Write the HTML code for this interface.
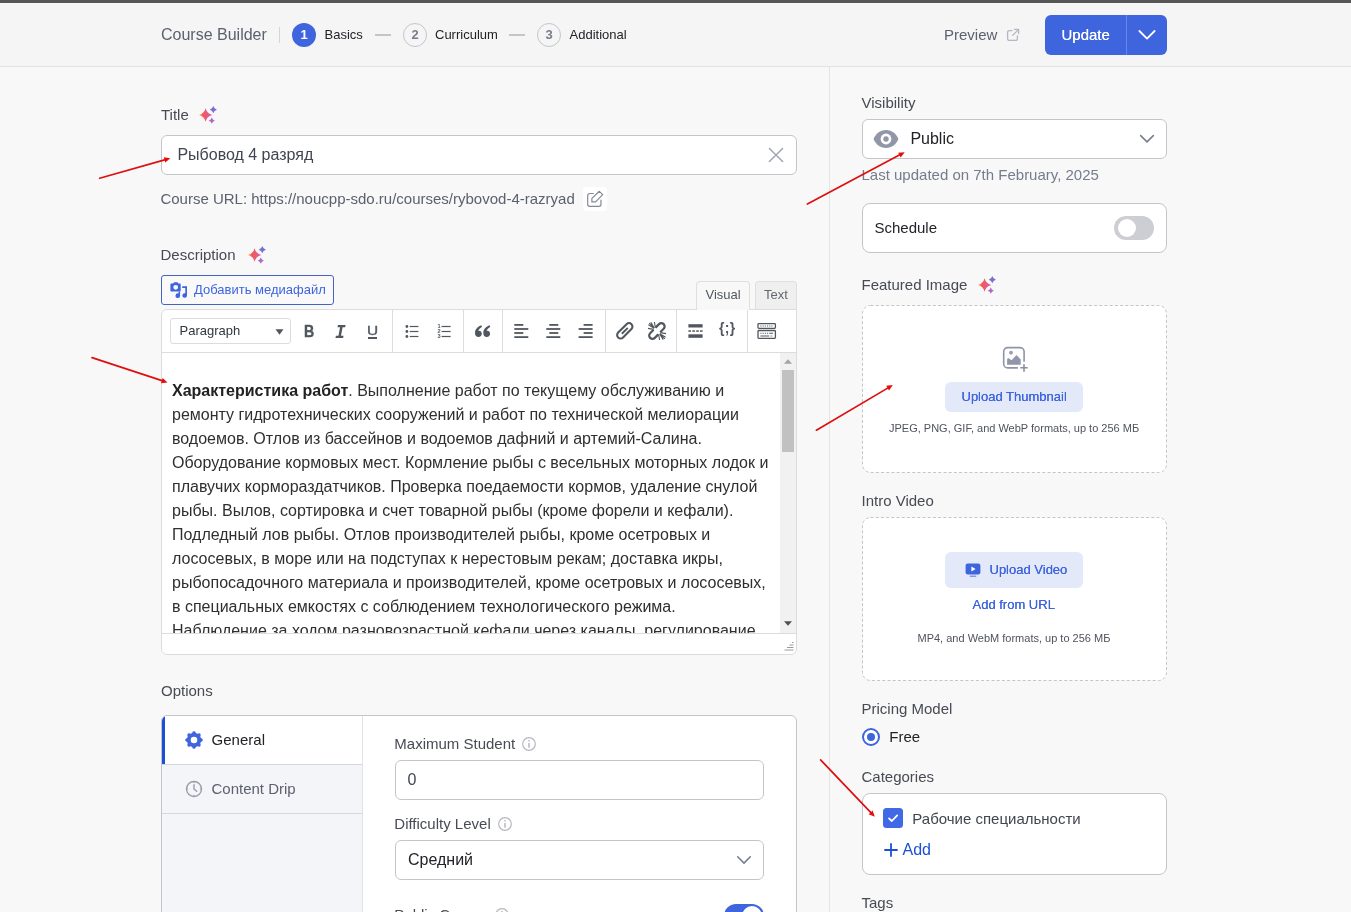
<!DOCTYPE html>
<html lang="ru"><head><meta charset="utf-8"><title>Course Builder</title>
<style>
*{box-sizing:border-box;margin:0;padding:0}
html,body{width:1351px;height:912px;overflow:hidden}
body{background:#f8f8f8;font-family:"Liberation Sans",sans-serif;position:relative;color:#484b54}
.a{position:absolute;display:block}
.t{position:absolute;white-space:nowrap;display:block}
.box{position:absolute;background:#fff;border:1px solid #c3c5cb;border-radius:6px}
.dash{position:absolute}
.ed-line{position:absolute;left:172px;white-space:nowrap;font-size:16px;line-height:24px;color:#2f2f2f;height:24px}
.sep{position:absolute;top:310px;width:1px;height:42px;background:#dcdcde}
.tb{position:absolute;font-family:"Liberation Sans",sans-serif;color:#50575e}
</style></head><body>
<div id="w" style="position:absolute;left:0;top:0;width:1351px;height:912px;will-change:transform">

<div class="a" style="left:0;top:0;width:1351px;height:3px;background:#565656"></div>
<div class="a" style="left:0;top:3px;width:1351px;height:64px;background:#f5f5f5;border-bottom:1px solid #e1e2e6"></div>
<span class="t" style="left:161px;top:27px;font-size:16px;line-height:16px;color:#5b616f;">Course Builder</span>
<div class="a" style="left:279px;top:27px;width:1px;height:16px;background:#d3d5db"></div>
<div class="a" style="left:292px;top:23px;width:24px;height:24px;border-radius:50%;background:#3e64de"></div>
<span class="t" style="left:300.6px;top:28px;font-size:13px;line-height:13px;color:#fff;font-weight:700;">1</span>
<span class="t" style="left:324.5px;top:28px;font-size:13px;line-height:13px;color:#212327;">Basics</span>
<div class="a" style="left:375px;top:34px;width:16px;height:2px;background:#c3c5cb"></div>
<div class="a" style="left:403px;top:23px;width:24px;height:24px;border-radius:50%;border:1px solid #c3c5cb"></div>
<span class="t" style="left:411.4px;top:28px;font-size:13px;line-height:13px;color:#767c8e;font-weight:700;">2</span>
<span class="t" style="left:435px;top:28px;font-size:13px;line-height:13px;color:#212327;">Curriculum</span>
<div class="a" style="left:509px;top:34px;width:16px;height:2px;background:#c3c5cb"></div>
<div class="a" style="left:537px;top:23px;width:24px;height:24px;border-radius:50%;border:1px solid #c3c5cb"></div>
<span class="t" style="left:545.4px;top:28px;font-size:13px;line-height:13px;color:#767c8e;font-weight:700;">3</span>
<span class="t" style="left:569.5px;top:28px;font-size:13px;line-height:13px;color:#212327;">Additional</span>
<span class="t" style="left:944px;top:27px;font-size:15px;line-height:15px;color:#5b616f;">Preview</span>
<svg class="a" style="left:1006px;top:28px" width="14" height="14" viewBox="0 0 14 14" fill="none" stroke="#b4b7c0" stroke-width="1.3" stroke-linecap="round" stroke-linejoin="round"><path d="M6 2.6H3.2a1.6 1.6 0 0 0-1.6 1.6v6.6a1.6 1.6 0 0 0 1.6 1.6h6.6a1.6 1.6 0 0 0 1.6-1.6V8"/><path d="M8.4 1.4h4.2v4.2M12.4 1.6 6.6 7.4"/></svg>
<div class="a" style="left:1045px;top:15px;width:122px;height:40px;border-radius:6px;background:#3e64de"></div>
<div class="a" style="left:1126px;top:15px;width:1px;height:40px;background:#6a88ea"></div>
<span class="t" style="left:1061.5px;top:27px;font-size:15px;line-height:15px;color:#fff;text-shadow:0 0 0.4px #fff;">Update</span>
<svg class="a" style="left:1137px;top:28px" width="20" height="14" viewBox="0 0 20 14" fill="none" stroke="#fff" stroke-width="1.8" stroke-linecap="round" stroke-linejoin="round"><path d="M2.4 3 10 10.6 17.6 3"/></svg>
<div class="a" style="left:829px;top:67px;width:1px;height:845px;background:#e3e4e8"></div>
<span class="t" style="left:161px;top:107px;font-size:15px;line-height:15px;color:#484b54;">Title</span>
<svg class="a" style="left:199px;top:106px" width="18" height="18" viewBox="0 0 18 18"><defs><linearGradient id="sg1" x1="0" y1="0" x2="1" y2="0"><stop offset="0" stop-color="#ffb84d"/><stop offset=".3" stop-color="#f25757"/><stop offset=".7" stop-color="#e75a8a"/><stop offset="1" stop-color="#c765c0"/></linearGradient></defs><path d="M6.6 2.30 Q7.94 7.66 13.30 9 Q7.94 10.34 6.6 15.70 Q5.26 10.34 -0.10 9 Q5.26 7.66 6.6 2.30Z" fill="url(#sg1)"/><path d="M14.3 0.10 Q15.09 2.91 17.90 3.7 Q15.09 4.49 14.3 7.30 Q13.51 4.49 10.70 3.7 Q13.51 2.91 14.3 0.10Z" fill="#7a6fd2"/><path d="M12.8 11.60 Q13.48 14.02 15.90 14.7 Q13.48 15.38 12.8 17.80 Q12.12 15.38 9.70 14.7 Q12.12 14.02 12.8 11.60Z" fill="#b565c4"/></svg>
<div class="box" style="left:161px;top:135px;width:636px;height:40px"></div>
<span class="t" style="left:177.4px;top:147px;font-size:16px;line-height:16px;color:#41454f;">Рыбовод 4 разряд</span>
<svg class="a" style="left:767px;top:146px" width="18" height="18" viewBox="0 0 18 18" fill="none" stroke="#9ea2ae" stroke-width="1.4" stroke-linecap="round"><path d="M2.4 2.4 15.6 15.6M15.6 2.4 2.4 15.6"/></svg>
<span class="t" style="left:160.4px;top:191px;font-size:15px;line-height:15px;color:#5b616f;">Course URL: https://noucpp-sdo.ru/courses/rybovod-4-razryad</span>
<div class="a" style="left:583px;top:187px;width:24px;height:24px;border-radius:4px;background:#fff"></div>
<svg class="a" style="left:587px;top:191px;overflow:visible" width="18" height="17" viewBox="0 0 18 17" fill="none" stroke="#858997" stroke-width="1.2" stroke-linejoin="round"><path d="M6.4 2.5H2.7a2 2 0 0 0-2 2v8.8a2 2 0 0 0 2 2H12a2 2 0 0 0 2-2V9.2" stroke-linecap="round"/><path d="M12.3 0.3 15.7 3.7 8.6 10.9H4.9V7.4z"/></svg>
<span class="t" style="left:160.5px;top:247px;font-size:15px;line-height:15px;color:#484b54;">Description</span>
<svg class="a" style="left:247.5px;top:246px" width="18" height="18" viewBox="0 0 18 18"><defs><linearGradient id="sg2" x1="0" y1="0" x2="1" y2="0"><stop offset="0" stop-color="#ffb84d"/><stop offset=".3" stop-color="#f25757"/><stop offset=".7" stop-color="#e75a8a"/><stop offset="1" stop-color="#c765c0"/></linearGradient></defs><path d="M6.6 2.30 Q7.94 7.66 13.30 9 Q7.94 10.34 6.6 15.70 Q5.26 10.34 -0.10 9 Q5.26 7.66 6.6 2.30Z" fill="url(#sg2)"/><path d="M14.3 0.10 Q15.09 2.91 17.90 3.7 Q15.09 4.49 14.3 7.30 Q13.51 4.49 10.70 3.7 Q13.51 2.91 14.3 0.10Z" fill="#7a6fd2"/><path d="M12.8 11.60 Q13.48 14.02 15.90 14.7 Q13.48 15.38 12.8 17.80 Q12.12 15.38 9.70 14.7 Q12.12 14.02 12.8 11.60Z" fill="#b565c4"/></svg>
<div class="a" style="left:161px;top:275px;width:173px;height:30px;border:1px solid #4663c4;border-radius:3px;background:#f9f9f9"></div>
<svg class="a" style="left:169px;top:281px" width="20" height="18" viewBox="0 0 20 18" fill="#3e64de"><path fill-rule="evenodd" d="M2.4 2.6h1.8l.9-1.3h3.4l.9 1.3h1.3c.6 0 1 .4 1 1v5.9c0 .6-.4 1-1 1H2.4c-.6 0-1-.4-1-1V3.6c0-.6.4-1 1-1zM6.7 3.9a2.4 2.4 0 1 0 0 4.8 2.4 2.4 0 0 0 0-4.8z"/><path d="M13.2 5.2h4.8v9.3a2.3 2.3 0 1 1-1.7-2.2V7h-3.1z"/><path d="M9.5 10.5h1.6v4.2a2.3 2.3 0 1 1-1.6-2.2z"/></svg>
<span class="t" style="left:194px;top:283px;font-size:13px;line-height:13px;color:#3e64de;">Добавить медиафайл</span>
<div class="a" style="left:696px;top:281px;width:54px;height:30px;border:1px solid #dfdfe1;border-bottom:none;background:#f8f8f8;border-radius:4px 4px 0 0"></div>
<div class="a" style="left:755px;top:281px;width:42px;height:28px;border:1px solid #dfdfe1;border-bottom:none;background:#efefef;border-radius:4px 4px 0 0"></div>
<span class="t" style="left:705.5px;top:288px;font-size:13px;line-height:13px;color:#50575e;">Visual</span>
<span class="t" style="left:764px;top:288px;font-size:13px;line-height:13px;color:#646970;">Text</span>
<div class="a" style="left:161px;top:309px;width:636px;height:346px;border:1px solid #dcdcde;border-radius:6px 0 6px 6px;background:#fff"></div>
<div class="a" style="left:162px;top:352px;width:634px;height:1px;background:#dcdcde"></div>
<div class="a" style="left:697px;top:309px;width:52px;height:1px;background:#f8f8f8"></div>
<div class="sep" style="left:392px"></div>
<div class="sep" style="left:463px"></div>
<div class="sep" style="left:502px"></div>
<div class="sep" style="left:605px"></div>
<div class="sep" style="left:676px"></div>
<div class="sep" style="left:747px"></div>
<div class="a" style="left:170px;top:318px;width:121px;height:26px;border:1px solid #dcdcde;border-radius:3px;background:#fff"></div>
<span class="t" style="left:179.5px;top:324px;font-size:13px;line-height:13px;color:#32373c;">Paragraph</span>
<svg class="a" style="left:275px;top:329px" width="9" height="6" viewBox="0 0 9 6"><path d="M0.5 0.3h8L4.5 5.7z" fill="#50575e"/></svg>
<span class="t" style="left:303.8px;top:321.2px;font:700 16.5px/20px 'Liberation Sans',sans-serif;color:#50575e;-webkit-text-stroke:.4px #50575e;transform:scaleX(.86);transform-origin:0 0">B</span>
<span class="t" style="left:335.2px;top:322px;font:italic 700 17.5px/20px 'DejaVu Sans Mono',monospace;color:#50575e">I</span>
<span class="t" style="left:366.8px;top:323px;font:400 13.4px/16px 'Liberation Sans',sans-serif;color:#50575e;-webkit-text-stroke:.350px #50575e;transform:scaleX(1.150);transform-origin:0 0">U</span>
<div class="a" style="left:367.5px;top:337px;width:9.5px;height:1.8px;background:#50575e"></div>
<svg class="a" style="left:404px;top:323px" width="16" height="16" viewBox="0 0 16 16" fill="#50575e"><rect x="5.8" y="2.9" width="8.6" height="1.2"/><rect x="5.8" y="7.9" width="8.6" height="1.2"/><rect x="5.8" y="12.9" width="8.6" height="1.2"/><circle cx="2.9" cy="3.5" r="1.4"/><circle cx="2.9" cy="8.5" r="1.4"/><circle cx="2.9" cy="13.5" r="1.4"/></svg>
<svg class="a" style="left:436px;top:323px" width="16" height="16" viewBox="0 0 16 16" fill="#50575e"><rect x="5.6" y="2.9" width="9" height="1.2"/><rect x="5.6" y="7.9" width="9" height="1.2"/><rect x="5.6" y="12.9" width="9" height="1.2"/><text x="1.4" y="5.4" font-size="5.6" font-family="Liberation Sans, sans-serif" font-weight="700">1</text><text x="1.4" y="10.4" font-size="5.6" font-family="Liberation Sans, sans-serif" font-weight="700">2</text><text x="1.4" y="15.4" font-size="5.6" font-family="Liberation Sans, sans-serif" font-weight="700">3</text></svg>
<svg class="a" style="left:475px;top:325px" width="16" height="13" viewBox="0 0 16 13" fill="#50575e"><path d="M6.3 0.2C2.8 1.4 0 4.2 0 7.9c0 2.4 1.4 4.1 3.5 4.1 1.9 0 3.3-1.4 3.3-3.2 0-1.7-1.2-3-2.9-3-.2 0-.4 0-.6.1.4-1.5 1.8-2.9 3.7-3.8z"/><path transform="translate(8.3 0)" d="M6.3 0.2C2.8 1.4 0 4.2 0 7.9c0 2.4 1.4 4.1 3.5 4.1 1.9 0 3.3-1.4 3.3-3.2 0-1.7-1.2-3-2.9-3-.2 0-.4 0-.6.1.4-1.5 1.8-2.9 3.7-3.8z"/></svg>
<svg class="a" style="left:513px;top:323px" width="16" height="16" viewBox="0 0 16 16" fill="#50575e"><rect x="1.3" y="1" width="9" height="1.8"/><rect x="1.3" y="5.1" width="14" height="1.8"/><rect x="1.3" y="9.1" width="9" height="1.8"/><rect x="1.3" y="13.2" width="14" height="1.8"/></svg>
<svg class="a" style="left:545px;top:323px" width="16" height="16" viewBox="0 0 16 16" fill="#50575e"><rect x="4.3" y="1" width="9" height="1.8"/><rect x="1.3" y="5.1" width="14" height="1.8"/><rect x="4.3" y="9.1" width="9" height="1.8"/><rect x="1.3" y="13.2" width="14" height="1.8"/></svg>
<svg class="a" style="left:577px;top:323px" width="16" height="16" viewBox="0 0 16 16" fill="#50575e"><rect x="6.6" y="1" width="9" height="1.8"/><rect x="1.6" y="5.1" width="14" height="1.8"/><rect x="6.6" y="9.1" width="9" height="1.8"/><rect x="1.6" y="13.2" width="14" height="1.8"/></svg>
<svg class="a" style="left:615px;top:321px" width="20" height="20" viewBox="0 0 20 20" fill="none" stroke="#50575e" stroke-width="2.1"><g transform="translate(9.8 9.8) rotate(-45)"><rect x="-9.4" y="-3.45" width="18.8" height="6.9" rx="3.45"/><path d="M-4.2 0H4.2" stroke-width="1.9"/></g></svg>
<svg class="a" style="left:647px;top:321px" width="20" height="20" viewBox="0 0 20 20" fill="none" stroke="#50575e" stroke-width="2.2" stroke-linecap="butt"><g transform="translate(12.7 7.1) rotate(-45)"><path d="M-2.6 -3.3H2.3a3.3 3.3 0 0 1 0 6.6H-2.6"/></g><g transform="translate(7.1 12.9) rotate(-45)"><path d="M2.6 3.3H-2.3a3.3 3.3 0 0 1 0-6.6H2.6"/></g><g stroke-width="1.1"><path d="M1.4 3.8l5.8 3.6M3.8 1.4l3.6 5.8M1 7.4l5.6 1M7.4 1l1 5.6M2.2 2.2l5 5"/><path d="M18.6 16.2l-5.8-3.6M16.2 18.6l-3.6-5.8M19 12.6l-5.6-1M12.6 19l-1-5.6M17.8 17.8l-5-5"/></g></svg>
<svg class="a" style="left:688px;top:323px" width="15" height="16" viewBox="0 0 15 16" fill="#50575e"><rect x="0.4" y="1.2" width="14.2" height="3.3"/><rect x="0.4" y="11.3" width="14.2" height="3.5"/><rect x="0.4" y="7.3" width="2.6" height="1.5"/><rect x="4.3" y="7.3" width="2.6" height="1.5"/><rect x="8.2" y="7.3" width="2.6" height="1.5"/><rect x="12" y="7.3" width="2.6" height="1.5"/></svg>
<span class="t" style="left:719px;top:319px;font:700 14px/18px 'Liberation Sans',sans-serif;color:#50575e;letter-spacing:.3px">{;}</span>
<svg class="a" style="left:757px;top:322px" width="20" height="18" viewBox="0 0 20 18" fill="none" stroke="#50575e"><rect x="1" y="1.6" width="17.4" height="4.8" rx=".8" stroke-width="1.3"/><rect x="1" y="8.5" width="17.4" height="7.8" rx=".8" stroke-width="1.3"/><g stroke-width="1.1" stroke-dasharray="1.1 1.1"><path d="M3.4 4h12.6M3.4 11.2h8"/><path d="M13.6 14h2.4"/></g><g stroke-width="1.1"><path d="M12.2 11.2h3.8M3.4 14h8.8"/></g></svg>
<div class="a" style="left:162px;top:353px;width:618px;height:280px;overflow:hidden">
<div class="ed-line" style="left:10px;top:25.5px"><b style="color:#222">Характеристика работ</b>. Выполнение работ по текущему обслуживанию и</div>
<div class="ed-line" style="left:10px;top:49.5px">ремонту гидротехнических сооружений и работ по технической мелиорации</div>
<div class="ed-line" style="left:10px;top:73.5px">водоемов. Отлов из бассейнов и водоемов дафний и артемий-Салина.</div>
<div class="ed-line" style="left:10px;top:97.5px">Оборудование кормовых мест. Кормление рыбы с весельных моторных лодок и</div>
<div class="ed-line" style="left:10px;top:121.5px">плавучих кормораздатчиков. Проверка поедаемости кормов, удаление снулой</div>
<div class="ed-line" style="left:10px;top:145.5px">рыбы. Вылов, сортировка и счет товарной рыбы (кроме форели и кефали).</div>
<div class="ed-line" style="left:10px;top:169.5px">Подледный лов рыбы. Отлов производителей рыбы, кроме осетровых и</div>
<div class="ed-line" style="left:10px;top:193.5px">лососевых, в море или на подступах к нерестовым рекам; доставка икры,</div>
<div class="ed-line" style="left:10px;top:217.5px">рыбопосадочного материала и производителей, кроме осетровых и лососевых,</div>
<div class="ed-line" style="left:10px;top:241.5px">в специальных емкостях с соблюдением технологического режима.</div>
<div class="ed-line" style="left:10px;top:265.5px">Наблюдение за ходом разновозрастной кефали через каналы, регулирование</div>
</div>
<div class="a" style="left:780px;top:353px;width:16px;height:280px;background:#f1f1f1"></div>
<div class="a" style="left:781.5px;top:370px;width:12.5px;height:82px;background:#c1c1c1"></div>
<svg class="a" style="left:783px;top:358px" width="10" height="7" viewBox="0 0 10 7"><path d="M5 1.2 9 5.8H1z" fill="#a3a3a3"/></svg>
<svg class="a" style="left:783px;top:620px" width="10" height="7" viewBox="0 0 10 7"><path d="M5 5.8 9 1.2H1z" fill="#505050"/></svg>
<div class="a" style="left:162px;top:633px;width:634px;height:1px;background:#dcdcde"></div>
<svg class="a" style="left:782px;top:641px" width="12" height="11" viewBox="0 0 12 11" stroke="#9a9a9a" stroke-width="1"><path d="M10 1.5h1.5M7.5 4h4M5 6.5h6.5M2.5 9h9"/></svg>
<span class="t" style="left:161px;top:683px;font-size:15px;line-height:15px;color:#484b54;">Options</span>
<div class="a" style="left:161px;top:715px;width:636px;height:220px;border:1px solid #c3c5cb;border-radius:6px 6px 0 0;background:#fff;overflow:hidden"><div class="a" style="left:0;top:0;width:201px;height:220px;background:#f4f5f9;border-right:1px solid #e0e2ea"></div><div class="a" style="left:0;top:0;width:200px;height:48px;background:#fff"></div><div class="a" style="left:0;top:48px;width:200px;height:1px;background:#d5d7de"></div><div class="a" style="left:0;top:97px;width:200px;height:1px;background:#d5d7de"></div><div class="a" style="left:0;top:0;width:3px;height:48px;background:#1a4fd6"></div></div>
<svg class="a" style="left:182.9px;top:729px" width="22" height="22" viewBox="0 0 22 22"><path fill="#3e64de" fill-rule="evenodd" d="M11.00 2.25 L11.34 2.28 L11.68 2.38 L12.00 2.54 L12.30 2.78 L12.54 3.25 L12.75 3.73 L12.98 3.99 L13.21 4.20 L13.45 4.36 L13.70 4.49 L13.96 4.57 L14.25 4.63 L14.56 4.65 L14.91 4.62 L15.39 4.43 L15.89 4.27 L16.27 4.31 L16.62 4.42 L16.92 4.59 L17.19 4.81 L17.41 5.08 L17.58 5.38 L17.69 5.73 L17.73 6.11 L17.57 6.61 L17.38 7.09 L17.35 7.44 L17.37 7.75 L17.43 8.04 L17.51 8.30 L17.64 8.55 L17.80 8.79 L18.01 9.02 L18.27 9.25 L18.75 9.46 L19.22 9.70 L19.46 10.00 L19.62 10.32 L19.72 10.66 L19.75 11.00 L19.72 11.34 L19.62 11.68 L19.46 12.00 L19.22 12.30 L18.75 12.54 L18.27 12.75 L18.01 12.98 L17.80 13.21 L17.64 13.45 L17.51 13.70 L17.43 13.96 L17.37 14.25 L17.35 14.56 L17.38 14.91 L17.57 15.39 L17.73 15.89 L17.69 16.27 L17.58 16.62 L17.41 16.92 L17.19 17.19 L16.92 17.41 L16.62 17.58 L16.27 17.69 L15.89 17.73 L15.39 17.57 L14.91 17.38 L14.56 17.35 L14.25 17.37 L13.96 17.43 L13.70 17.51 L13.45 17.64 L13.21 17.80 L12.98 18.01 L12.75 18.27 L12.54 18.75 L12.30 19.22 L12.00 19.46 L11.68 19.62 L11.34 19.72 L11.00 19.75 L10.66 19.72 L10.32 19.62 L10.00 19.46 L9.70 19.22 L9.46 18.75 L9.25 18.27 L9.02 18.01 L8.79 17.80 L8.55 17.64 L8.30 17.51 L8.04 17.43 L7.75 17.37 L7.44 17.35 L7.09 17.38 L6.61 17.57 L6.11 17.73 L5.73 17.69 L5.38 17.58 L5.08 17.41 L4.81 17.19 L4.59 16.92 L4.42 16.62 L4.31 16.27 L4.27 15.89 L4.43 15.39 L4.62 14.91 L4.65 14.56 L4.63 14.25 L4.57 13.96 L4.49 13.70 L4.36 13.45 L4.20 13.21 L3.99 12.98 L3.73 12.75 L3.25 12.54 L2.78 12.30 L2.54 12.00 L2.38 11.68 L2.28 11.34 L2.25 11.00 L2.28 10.66 L2.38 10.32 L2.54 10.00 L2.78 9.70 L3.25 9.46 L3.73 9.25 L3.99 9.02 L4.20 8.79 L4.36 8.55 L4.49 8.30 L4.57 8.04 L4.63 7.75 L4.65 7.44 L4.62 7.09 L4.43 6.61 L4.27 6.11 L4.31 5.73 L4.42 5.38 L4.59 5.08 L4.81 4.81 L5.08 4.59 L5.38 4.42 L5.73 4.31 L6.11 4.27 L6.61 4.43 L7.09 4.62 L7.44 4.65 L7.75 4.63 L8.04 4.57 L8.30 4.49 L8.55 4.36 L8.79 4.20 L9.02 3.99 L9.25 3.73 L9.46 3.25 L9.70 2.78 L10.00 2.54 L10.32 2.38 L10.66 2.28Z M7.70 11a3.3 3.3 0 1 0 6.6 0a3.3 3.3 0 1 0 -6.6 0Z"/></svg>
<span class="t" style="left:211.6px;top:732px;font-size:15px;line-height:15px;color:#212327;">General</span>
<svg class="a" style="left:185px;top:780px" width="18" height="18" viewBox="0 0 18 18" fill="none" stroke="#9a9eab" stroke-width="1.4" stroke-linecap="round" stroke-linejoin="round"><circle cx="9" cy="9" r="7.5"/><path d="M9 4.8V9l2.7 2.3"/><path d="M9 1.5v1.2M9 15.3v1.2M1.5 9h1.2M15.3 9h1.2" stroke-width="1"/></svg>
<span class="t" style="left:211.5px;top:781px;font-size:15px;line-height:15px;color:#5b616f;">Content Drip</span>
<span class="t" style="left:394.3px;top:736px;font-size:15px;line-height:15px;color:#484b54;">Maximum Student</span>
<svg class="a" style="left:522px;top:737px" width="14" height="14" viewBox="0 0 14 14" fill="none" stroke="#b6b8be" stroke-width="1.2"><circle cx="7" cy="7" r="6.3"/><path d="M7 6v4.8" stroke-width="1.7" stroke="#bfc0c6"/><circle cx="7" cy="3.7" r=".9" fill="#bfc0c6" stroke="none"/></svg>
<div class="box" style="left:395px;top:760px;width:369px;height:40px"></div>
<span class="t" style="left:407.5px;top:772px;font-size:16px;line-height:16px;color:#41454f;">0</span>
<span class="t" style="left:394.3px;top:816px;font-size:15px;line-height:15px;color:#484b54;">Difficulty Level</span>
<svg class="a" style="left:498px;top:817px" width="14" height="14" viewBox="0 0 14 14" fill="none" stroke="#b6b8be" stroke-width="1.2"><circle cx="7" cy="7" r="6.3"/><path d="M7 6v4.8" stroke-width="1.7" stroke="#bfc0c6"/><circle cx="7" cy="3.7" r=".9" fill="#bfc0c6" stroke="none"/></svg>
<div class="box" style="left:395px;top:840px;width:369px;height:40px"></div>
<span class="t" style="left:408px;top:852px;font-size:16px;line-height:16px;color:#212327;">Средний</span>
<svg class="a" style="left:735px;top:853px" width="18" height="14" viewBox="0 0 18 14" fill="none" stroke="#767c8e" stroke-width="1.5" stroke-linecap="round" stroke-linejoin="round"><path d="M2.7 3.8 9 10.1 15.3 3.8"/></svg>
<span class="t" style="left:394.3px;top:907px;font-size:15px;line-height:15px;color:#484b54;">Public Course</span>
<svg class="a" style="left:495px;top:908px" width="14" height="14" viewBox="0 0 14 14" fill="none" stroke="#b6b8be" stroke-width="1.2"><circle cx="7" cy="7" r="6.3"/><path d="M7 6v4.8" stroke-width="1.7" stroke="#bfc0c6"/><circle cx="7" cy="3.7" r=".9" fill="#bfc0c6" stroke="none"/></svg>
<div class="a" style="left:724px;top:904px;width:40px;height:24px;border-radius:12px;background:#3e64de"></div>
<div class="a" style="left:742px;top:906px;width:20px;height:20px;border-radius:50%;background:#fff"></div>
<span class="t" style="left:861.5px;top:95px;font-size:15px;line-height:15px;color:#484b54;">Visibility</span>
<div class="box" style="left:862px;top:119px;width:305px;height:40px"></div>
<svg class="a" style="left:873px;top:129px" width="26" height="20" viewBox="0 0 26 20"><path d="M13 1C7.2 1 2.6 4.8 .6 10c2 5.2 6.6 9 12.4 9s10.4-3.8 12.4-9C23.4 4.8 18.8 1 13 1z" fill="#9197a8"/><circle cx="13" cy="10" r="5.4" fill="#fff"/><circle cx="13" cy="10" r="2.7" fill="#9197a8"/></svg>
<span class="t" style="left:910.4px;top:131px;font-size:16px;line-height:16px;color:#212327;">Public</span>
<svg class="a" style="left:1138px;top:131px" width="18" height="16" viewBox="0 0 18 16" fill="none" stroke="#767c8e" stroke-width="1.5" stroke-linecap="round" stroke-linejoin="round"><path d="M2.7 4.6 9 10.9 15.3 4.6"/></svg>
<span class="t" style="left:861.5px;top:167px;font-size:15px;line-height:15px;color:#767c8e;">Last updated on 7th February, 2025</span>
<div class="box" style="left:862px;top:203px;width:305px;height:50px;border-radius:8px"></div>
<span class="t" style="left:874.5px;top:220px;font-size:15px;line-height:15px;color:#212327;">Schedule</span>
<div class="a" style="left:1114px;top:216px;width:40px;height:24px;border-radius:12px;background:#cdced3"></div>
<div class="a" style="left:1117.6px;top:218.7px;width:18.6px;height:18.6px;border-radius:50%;background:#fff"></div>
<span class="t" style="left:861.5px;top:277px;font-size:15px;line-height:15px;color:#484b54;">Featured Image</span>
<svg class="a" style="left:978px;top:276px" width="18" height="18" viewBox="0 0 18 18"><defs><linearGradient id="sg3" x1="0" y1="0" x2="1" y2="0"><stop offset="0" stop-color="#ffb84d"/><stop offset=".3" stop-color="#f25757"/><stop offset=".7" stop-color="#e75a8a"/><stop offset="1" stop-color="#c765c0"/></linearGradient></defs><path d="M6.6 2.30 Q7.94 7.66 13.30 9 Q7.94 10.34 6.6 15.70 Q5.26 10.34 -0.10 9 Q5.26 7.66 6.6 2.30Z" fill="url(#sg3)"/><path d="M14.3 0.10 Q15.09 2.91 17.90 3.7 Q15.09 4.49 14.3 7.30 Q13.51 4.49 10.70 3.7 Q13.51 2.91 14.3 0.10Z" fill="#7a6fd2"/><path d="M12.8 11.60 Q13.48 14.02 15.90 14.7 Q13.48 15.38 12.8 17.80 Q12.12 15.38 9.70 14.7 Q12.12 14.02 12.8 11.60Z" fill="#b565c4"/></svg>
<svg class="a" style="left:862px;top:305px" width="305" height="168"><rect x=".5" y=".5" width="304" height="167" rx="8" fill="#fff" stroke="#c3c5cb" stroke-width="1" stroke-dasharray="3 2.2"/></svg>
<svg class="a" style="left:1002px;top:346px;overflow:visible" width="28" height="28" viewBox="0 0 28 28" fill="none"><path d="M22.1 15.7V5.6a4 4 0 0 0-4-4H5.7a4 4 0 0 0-4 4v12.3a4 4 0 0 0 4 4h10.2" stroke="#9095a5" stroke-width="1.6"/><circle cx="9" cy="6.7" r="1.9" fill="#9a9eae"/><path d="M5.1 18.75V13l1.4-1 3 2.2 5-5.1 4.2 4.4v5.25z" fill="#9196a8"/><path d="M22 18.3v7.4M18.3 21.8h7.4" stroke="#8a8e9d" stroke-width="1.6"/></svg>
<div class="a" style="left:945px;top:382px;width:138px;height:30px;border-radius:6px;background:#e4e9fa"></div>
<span class="t" style="left:961.5px;top:390px;font-size:13px;line-height:13px;color:#3e64de;text-shadow:0 0 .3px #3e64de;">Upload Thumbnail</span>
<span class="t" style="left:889px;top:423px;font-size:11px;line-height:11px;color:#4f535d;">JPEG, PNG, GIF, and WebP formats, up to 256 МБ</span>
<span class="t" style="left:861.5px;top:493px;font-size:15px;line-height:15px;color:#484b54;">Intro Video</span>
<svg class="a" style="left:862px;top:517px" width="305" height="164"><rect x=".5" y=".5" width="304" height="163" rx="8" fill="#fff" stroke="#c3c5cb" stroke-width="1" stroke-dasharray="3 2.2"/></svg>
<div class="a" style="left:945px;top:552px;width:138px;height:36px;border-radius:6px;background:#e4e9fa"></div>
<svg class="a" style="left:965px;top:563px" width="16" height="15" viewBox="0 0 16 15"><rect x=".6" y=".6" width="14.8" height="10.8" rx="2.2" fill="#3e64de"/><path d="M6.4 3.4v5.2L10.6 6z" fill="#fff"/><rect x="4.6" y="12.6" width="6.8" height="1.4" rx=".7" fill="#7f98ea"/></svg>
<span class="t" style="left:989.5px;top:563px;font-size:13px;line-height:13px;color:#3e64de;text-shadow:0 0 .3px #3e64de;">Upload Video</span>
<span class="t" style="left:972.5px;top:598px;font-size:13px;line-height:13px;color:#3e64de;text-shadow:0 0 .3px #3e64de;">Add from URL</span>
<span class="t" style="left:917.5px;top:633px;font-size:11px;line-height:11px;color:#4f535d;">MP4, and WebM formats, up to 256 МБ</span>
<span class="t" style="left:861.5px;top:701px;font-size:15px;line-height:15px;color:#484b54;">Pricing Model</span>
<div class="a" style="left:862px;top:728px;width:18px;height:18px;border-radius:50%;border:2px solid #3e64de;background:#fff"></div>
<div class="a" style="left:867px;top:733px;width:8px;height:8px;border-radius:50%;background:#3e64de"></div>
<span class="t" style="left:889.3px;top:729px;font-size:15px;line-height:15px;color:#212327;">Free</span>
<span class="t" style="left:861.5px;top:769px;font-size:15px;line-height:15px;color:#484b54;">Categories</span>
<div class="box" style="left:862px;top:793px;width:305px;height:82px;border-radius:8px"></div>
<div class="a" style="left:883px;top:808px;width:20px;height:20px;border-radius:3.5px;background:#4169e6"></div>
<svg class="a" style="left:883px;top:808px" width="20" height="20" viewBox="0 0 20 20" fill="none" stroke="#fff" stroke-width="1.8" stroke-linecap="round" stroke-linejoin="round"><path d="M6 10.4 8.8 13 14.2 7.4"/></svg>
<span class="t" style="left:912.3px;top:811px;font-size:15px;line-height:15px;color:#41454f;">Рабочие специальности</span>
<svg class="a" style="left:884px;top:843px" width="14" height="14" viewBox="0 0 14 14" stroke="#1a4fd6" stroke-width="1.8" stroke-linecap="round"><path d="M7 1v12M1 7h12"/></svg>
<span class="t" style="left:902.5px;top:842px;font-size:16px;line-height:16px;color:#1a4fd6;">Add</span>
<span class="t" style="left:861.5px;top:895px;font-size:15px;line-height:15px;color:#484b54;">Tags</span>
<svg class="a" style="left:0;top:0;pointer-events:none" width="1351" height="912">
<line x1="99.6" y1="178.3" x2="165.49" y2="159.66" stroke="#de0f0f" stroke-width="1.7" stroke-linecap="round"/><polygon points="170.3,158.3 165.26,162.53 163.79,157.34" fill="#e60d0d"/>
<line x1="92" y1="357.6" x2="162.75" y2="380.93" stroke="#de0f0f" stroke-width="1.7" stroke-linecap="round"/><polygon points="167.5,382.5 160.96,383.18 162.65,378.06" fill="#e60d0d"/>
<line x1="807.4" y1="204" x2="900.29" y2="154.55" stroke="#de0f0f" stroke-width="1.7" stroke-linecap="round"/><polygon points="904.7,152.2 900.67,157.40 898.13,152.64" fill="#e60d0d"/>
<line x1="816.4" y1="430.2" x2="888.49" y2="387.64" stroke="#de0f0f" stroke-width="1.7" stroke-linecap="round"/><polygon points="892.8,385.1 889.01,390.48 886.26,385.82" fill="#e60d0d"/>
<line x1="820.6" y1="759.8" x2="871.35" y2="813.18" stroke="#de0f0f" stroke-width="1.7" stroke-linecap="round"/><polygon points="874.8,816.8 868.71,814.31 872.62,810.59" fill="#e60d0d"/>
</svg>
</div></body></html>
